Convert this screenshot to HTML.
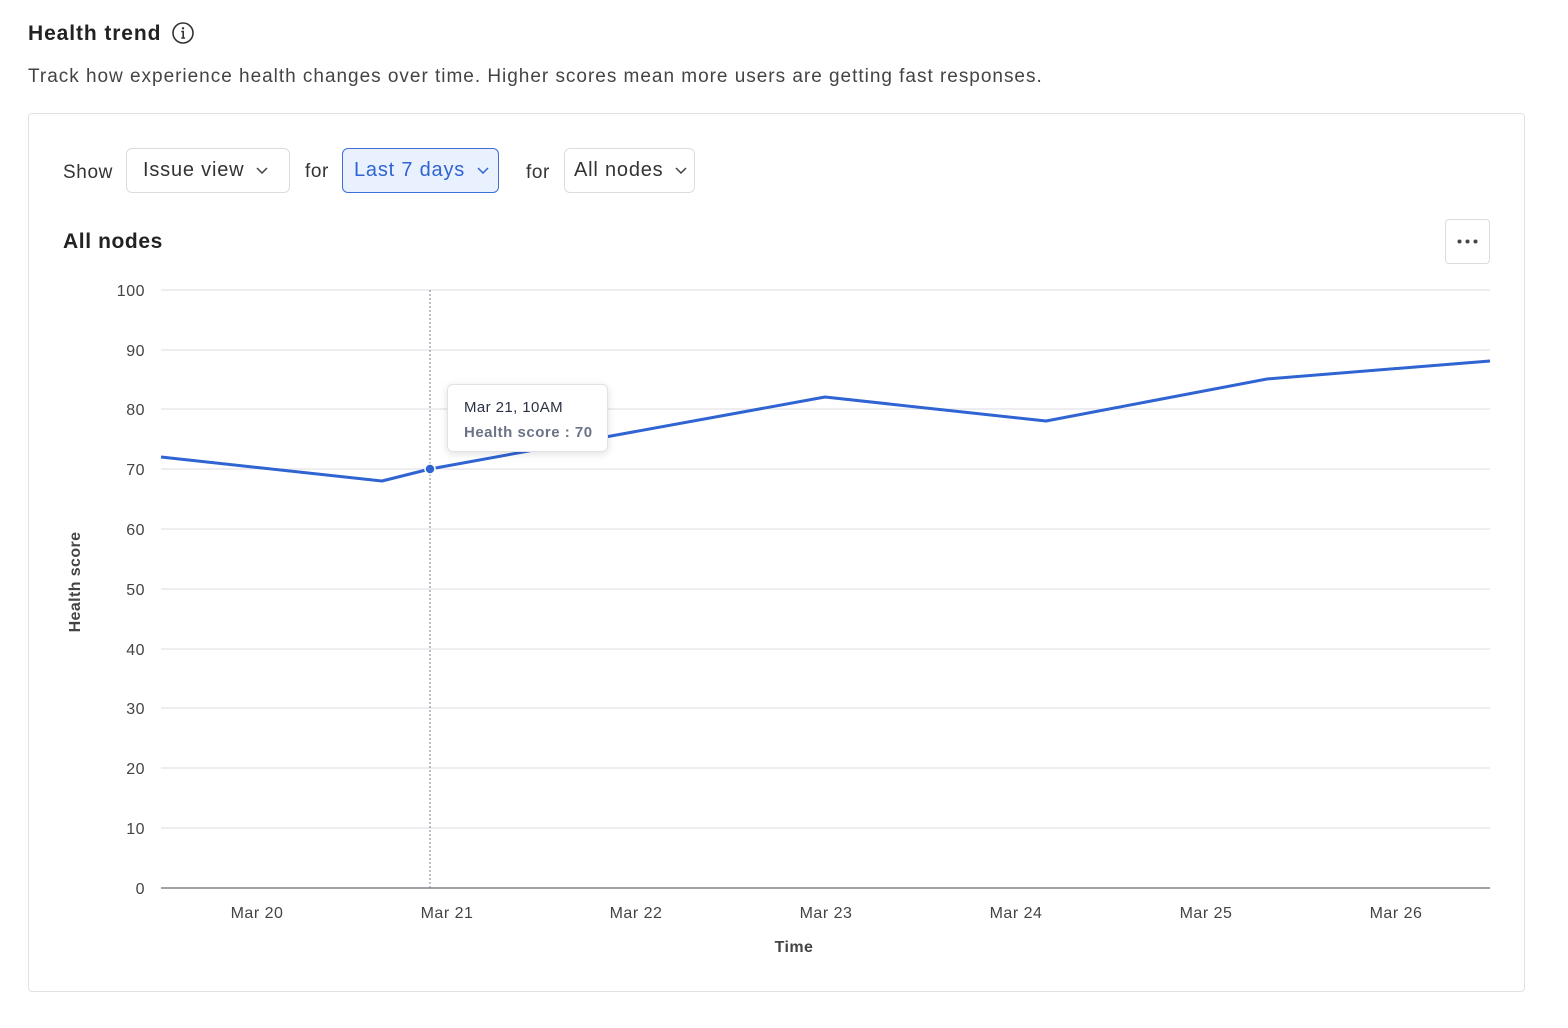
<!DOCTYPE html>
<html><head><meta charset="utf-8">
<style>
*{margin:0;padding:0;box-sizing:border-box}
body{width:1568px;height:1028px;background:#fff;font-family:"Liberation Sans",sans-serif;position:relative;overflow:hidden;color:#222}
.abs{position:absolute}
.title{left:28px;top:22px;font-size:21px;font-weight:bold;color:#222;letter-spacing:0.9px}
.desc{left:28px;top:66px;font-size:19px;color:#444;letter-spacing:0.98px}
.card{left:28px;top:113px;width:1497px;height:879px;border:1.5px solid #e2e2e4;border-radius:4px}
.lbl{font-size:19px;color:#333;letter-spacing:0.6px}
.dd{height:45px;border:1.5px solid #dcdcde;border-radius:6px;font-size:20px;color:#333;display:flex;align-items:center;padding-left:16px;letter-spacing:0.8px}
.dd svg{margin-left:12px}
.blue{background:#eaf1fe;border-color:#3c6fd8;color:#2f64d2}
.more{left:1445px;top:219px;width:45px;height:45px;border:1.5px solid #dcdcde;border-radius:4px}
</style></head><body>
<div class="abs title">Health trend</div>
<svg class="abs" style="left:171px;top:21px" width="24" height="24" viewBox="0 0 24 24"><circle cx="12" cy="12" r="10" fill="none" stroke="#333" stroke-width="1.6"/><circle cx="12" cy="7.3" r="1.2" fill="#333"/><path d="M10.3 10.5H12.2V17M10.3 17H14" fill="none" stroke="#333" stroke-width="1.6"/></svg>
<div class="abs desc">Track how experience health changes over time. Higher scores mean more users are getting fast responses.</div>
<div class="abs card"></div>
<div class="abs lbl" style="left:63px;top:162px">Show</div>
<div class="abs dd" style="left:126px;top:148px;width:164px">Issue view<svg width="12" height="7" viewBox="0 0 12 7"><path d="M1 1l5 5 5-5" fill="none" stroke="#444" stroke-width="1.5"/></svg></div>
<div class="abs lbl" style="left:305px;top:161px">for</div>
<div class="abs dd blue" style="left:342px;top:148px;width:157px;padding-left:11px">Last 7 days<svg width="12" height="7" viewBox="0 0 12 7"><path d="M1 1l5 5 5-5" fill="none" stroke="#2f64d2" stroke-width="1.5"/></svg></div>
<div class="abs lbl" style="left:526px;top:162px">for</div>
<div class="abs dd" style="left:564px;top:148px;width:131px;padding-left:9px">All nodes<svg width="12" height="7" viewBox="0 0 12 7"><path d="M1 1l5 5 5-5" fill="none" stroke="#444" stroke-width="1.5"/></svg></div>
<div class="abs" style="left:63px;top:230px;font-size:21px;font-weight:bold;color:#222;letter-spacing:0.6px">All nodes</div>
<div class="abs more"><svg width="45" height="45" viewBox="0 0 45 45" style="position:absolute;left:-1.5px;top:-1.5px"><circle cx="14.5" cy="22.5" r="2" fill="#444"/><circle cx="22.5" cy="22.5" r="2" fill="#444"/><circle cx="30.5" cy="22.5" r="2" fill="#444"/></svg></div>
<svg class="abs" style="left:0;top:0" width="1568" height="1028" font-family="Liberation Sans, sans-serif">
<g stroke="#e3e3e6" stroke-width="1.2">
<line x1="161" x2="1490" y1="290" y2="290"/><line x1="161" x2="1490" y1="350" y2="350"/><line x1="161" x2="1490" y1="409" y2="409"/><line x1="161" x2="1490" y1="469" y2="469"/><line x1="161" x2="1490" y1="529" y2="529"/><line x1="161" x2="1490" y1="589" y2="589"/><line x1="161" x2="1490" y1="649" y2="649"/><line x1="161" x2="1490" y1="708" y2="708"/><line x1="161" x2="1490" y1="768" y2="768"/><line x1="161" x2="1490" y1="828" y2="828"/>
</g>
<line x1="161" x2="1490" y1="888" y2="888" stroke="#666a72" stroke-width="1.3"/>
<g font-size="16" fill="#444" text-anchor="end" letter-spacing="0.5">
<text x="145" y="296">100</text><text x="145" y="356">90</text><text x="145" y="415">80</text><text x="145" y="475">70</text><text x="145" y="535">60</text><text x="145" y="595">50</text><text x="145" y="655">40</text><text x="145" y="714">30</text><text x="145" y="774">20</text><text x="145" y="834">10</text><text x="145" y="894">0</text>
</g>
<g font-size="16" fill="#444" text-anchor="middle" letter-spacing="0.5">
<text x="257" y="918">Mar 20</text><text x="447" y="918">Mar 21</text><text x="636" y="918">Mar 22</text><text x="826" y="918">Mar 23</text><text x="1016" y="918">Mar 24</text><text x="1206" y="918">Mar 25</text><text x="1396" y="918">Mar 26</text>
</g>
<text x="794" y="952" font-size="16" font-weight="bold" fill="#444" text-anchor="middle" letter-spacing="0.4">Time</text>
<text transform="translate(80,582) rotate(-90)" font-size="16" font-weight="bold" fill="#444" text-anchor="middle" letter-spacing="0.4">Health score</text>
<line x1="430" x2="430" y1="290" y2="888" stroke="#7a8296" stroke-width="1" stroke-dasharray="2,2"/>
<polyline points="161,457 382,481 430,469 825,397 1046,421 1267,379 1490,361" fill="none" stroke="#2f64d2" stroke-width="3" stroke-linejoin="round"/>
<circle cx="430" cy="469" r="5" fill="#2f64d2" stroke="#fff" stroke-width="1.5"/>
<defs><filter id="sh" x="-20%" y="-30%" width="140%" height="170%"><feDropShadow dx="0" dy="2" stdDeviation="4" flood-color="#000" flood-opacity="0.12"/></filter></defs>
<rect x="447.5" y="384.5" width="160" height="67" rx="5" fill="#fff" stroke="#e2e2e6" filter="url(#sh)"/>
<text x="464" y="412" font-size="15" fill="#2a3142" letter-spacing="0.4">Mar 21, 10AM</text>
<text x="464" y="437" font-size="15" font-weight="bold" fill="#6b7386" letter-spacing="0.5">Health score : 70</text>
</svg>
</body></html>
